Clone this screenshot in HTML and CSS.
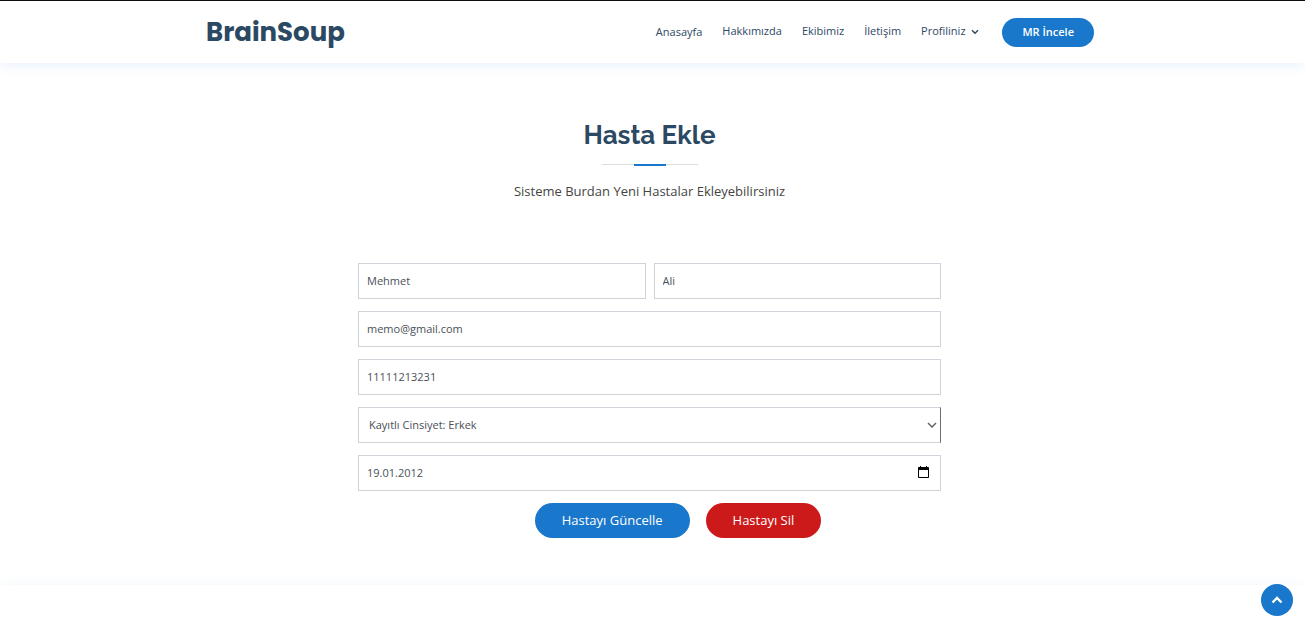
FILE: index.html
```html
<!DOCTYPE html>
<html lang="tr">
<head>
<meta charset="utf-8">
<meta name="viewport" content="width=device-width, initial-scale=1">
<title>BrainSoup</title>
<link rel="stylesheet" href="styles.css">
</head>
<body>
<header class="header">
  <div class="container header-row">
    <a class="brand" href="#">BrainSoup</a>
    <nav class="nav">
      <a class="nav-link nav-home" href="#">Anasayfa</a>
      <a class="nav-link" href="#">Hakkımızda</a>
      <a class="nav-link" href="#">Ekibimiz</a>
      <a class="nav-link" href="#">İletişim</a>
      <a class="nav-link" href="#">Profiliniz
        <svg class="nav-caret" viewBox="0 0 8 6" aria-hidden="true"><path d="M1 1.2 4 4.2 7 1.2"/></svg>
      </a>
    </nav>
    <a class="cta" href="#">MR İncele</a>
  </div>
</header>
<main class="main">
  <div class="section-title">
    <h1 class="title">Hasta Ekle</h1>
    <p class="subtitle">Sisteme Burdan Yeni Hastalar Ekleyebilirsiniz</p>
  </div>
  <form class="form">
    <div class="form-pair">
      <input class="field" type="text" aria-label="Ad" value="Mehmet">
      <input class="field" type="text" aria-label="Soyad" value="Ali">
    </div>
    <input class="field" type="email" aria-label="E-posta" value="memo@gmail.com">
    <input class="field" type="text" aria-label="Kimlik numarası" value="11111213231">
    <div class="field-wrap">
      <select class="field field-select" aria-label="Cinsiyet">
        <option>Kayıtlı Cinsiyet: Erkek</option>
      </select>
      <svg class="select-caret" viewBox="0 0 10 6" aria-hidden="true"><path d="M1 1 5 5 9 1"/></svg>
    </div>
    <div class="field-wrap">
      <input class="field field-date" type="text" aria-label="Doğum tarihi" value="19.01.2012">
      <button class="date-button" type="button" aria-label="Takvimi aç">
        <svg class="date-icon" viewBox="0 0 11 12" aria-hidden="true"><path d="M2 0h1v1h5V0h1v1h1.2q.8 0 .8.8v9.4q0 .8-.8.8H.8Q0 12 0 11.2V1.8Q0 1 .8 1H2zM1 4v7h9V4z" fill-rule="evenodd"/></svg>
      </button>
    </div>
    <div class="actions">
      <button class="button button-update" type="submit">Hastayı Güncelle</button>
      <button class="button button-delete" type="button">Hastayı Sil</button>
    </div>
  </form>
</main>
<footer class="footer"></footer>
<a class="back-to-top" href="#" aria-label="Yukarı çık">
  <svg class="top-icon" viewBox="0 0 12 8" aria-hidden="true"><path d="M1.5 6.5 6 2 10.5 6.5"/></svg>
</a>
</body>
</html>
```
FILE: styles.css
```css
* {
  box-sizing: border-box;
}

body {
  margin: 0;
  min-height: 100vh;
  display: flex;
  flex-direction: column;
  background: #fff;
  color: #444;
  font-family: "Open Sans", "Noto Sans", sans-serif;
  font-size: 13px;
}

a {
  text-decoration: none;
}

.header {
  position: relative;
  padding-right: 5px;
  border-top: 1px solid #0e0c10;
  background: #fff;
  box-shadow: 0 2px 12px rgba(25, 119, 204, 0.1);
}

.container {
  max-width: 912px;
  margin: 0 auto;
  padding: 0 12px;
}

.header-row {
  display: flex;
  align-items: center;
  min-height: 62px;
}

.brand {
  margin-right: auto;
  color: #2c4964;
  font-family: Poppins, Inter, sans-serif;
  font-size: 26px;
  font-weight: 700;
}

.nav {
  display: flex;
  gap: 20px;
  padding-bottom: 2px;
}

.nav-link {
  color: #2c4964;
  font-size: 11px;
  line-height: 16px;
}

.nav-home {
  padding-top: 1px;
}

.nav-caret {
  width: 8px;
  height: 6px;
  margin-left: 3px;
  fill: none;
  stroke: #2c4964;
  stroke-width: 1.4;
}

.cta {
  margin-left: 23px;
  padding: 6px 20px 7px;
  border-radius: 50px;
  background: #1977cc;
  color: #fff;
  font-size: 11px;
  font-weight: 600;
  line-height: 16px;
}

.main {
  padding: 57px 18px 47px 12px;
}

.section-title {
  text-align: center;
}

.title {
  position: relative;
  margin: 0 0 15px;
  padding-bottom: 15px;
  color: #2c4964;
  font-family: Raleway, Lato, sans-serif;
  font-size: 26px;
  font-weight: 700;
  line-height: 31px;
}

.title::before,
.title::after {
  content: "";
  position: absolute;
  left: 50%;
  transform: translateX(-50%);
}

.title::before {
  bottom: 1px;
  width: 96px;
  height: 1px;
  background: #ddd;
}

.title::after {
  bottom: 0;
  width: 32px;
  height: 2px;
  background: #1977cc;
}

.subtitle {
  margin: 0;
  line-height: 20px;
}

.form {
  display: flex;
  flex-direction: column;
  gap: 12px;
  max-width: 583px;
  margin: 62px auto 0;
}

.form-pair {
  display: grid;
  grid-template-columns: 1fr 1fr;
  gap: 8px;
}

.field {
  display: block;
  width: 100%;
  height: 36px;
  margin: 0;
  padding: 0 8px 2px;
  border: 1px solid #ced4da;
  border-radius: 0;
  background: #fff;
  color: #495057;
  font-family: inherit;
  font-size: 11px;
}

.field-wrap {
  position: relative;
}

.field-select {
  appearance: none;
  padding: 0 10px 2px;
  border-right-color: #6b6b70;
}

.select-caret {
  position: absolute;
  top: 15px;
  right: 4px;
  width: 10px;
  height: 6px;
  fill: none;
  stroke: #666;
  stroke-width: 1.5;
  pointer-events: none;
}

.date-button {
  position: absolute;
  top: 7px;
  right: 8px;
  display: grid;
  place-items: center;
  width: 20px;
  height: 20px;
  padding: 0;
  border: 0;
  background: none;
}

.date-icon {
  width: 11px;
  height: 12px;
  fill: #000;
}

.actions {
  display: flex;
  justify-content: center;
  gap: 16px;
  padding-left: 57px;
}

.button {
  padding: 8px 27px 9px;
  border: 0;
  border-radius: 50px;
  color: #fff;
  font-family: inherit;
  font-size: 13px;
  line-height: 18px;
}

.button-update {
  background: #1977cc;
}

.button-delete {
  background: #cc1919;
}

.footer {
  flex: 1;
  background: #fff;
  box-shadow: 0 0 12px rgba(25, 119, 204, 0.06);
}

.back-to-top {
  position: fixed;
  right: 12px;
  bottom: 11px;
  display: grid;
  place-items: center;
  width: 32px;
  height: 32px;
  border-radius: 50%;
  background: #1977cc;
}

.top-icon {
  width: 12px;
  height: 8px;
  fill: none;
  stroke: #fff;
  stroke-width: 2.4;
}
```
